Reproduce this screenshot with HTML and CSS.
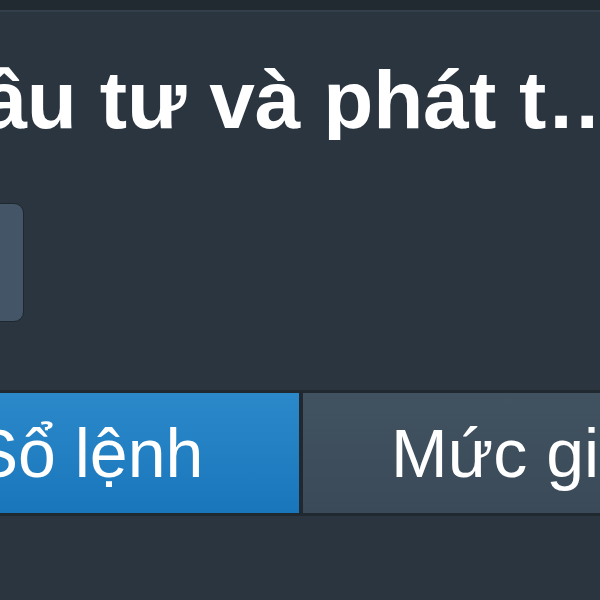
FILE: index.html
```html
<!DOCTYPE html>
<html>
<head>
    <title>Chi tiết mã</title>
    <link rel="stylesheet" href="styles.css">
</head>
<body>
    <div class="topbar"></div>

    <div class="header">
        <h1 class="title">Đầu tư và phát triển</h1>
        <div class="search-box"></div>
    </div>

    <div class="tabs">
        <div class="tab active">Sổ lệnh</div>
        <div class="tab">Mức giá</div>
    </div>
</body>
</html>
```

FILE: styles.css
```css
body {
    font-family: 'Liberation Sans', Arial, sans-serif;
    margin: 0;
    background-color: #2a3540;
    overflow: hidden;
    width: 600px;
    height: 600px;
}

.topbar {
    height: 10px;
    background-color: #212931;
    border-bottom: 2px solid #33404c;
}

.header {
    display: flex;
    flex-direction: column;
}

.title {
    margin: 48px 0 0 -78px;
    width: 733px;
    font-size: 82px;
    line-height: 80px;
    font-weight: bold;
    color: #fff;
    white-space: nowrap;
    overflow: hidden;
    text-overflow: ellipsis;
}

.search-box {
    margin: 63px 0 0 -76px;
    width: 98px;
    height: 117px;
    background-color: #435566;
    border: 1px solid #1f272f;
    border-radius: 10px;
}

.tabs {
    display: flex;
    gap: 4px;
    margin: 68px 0 0 -123px;
    padding: 3px 0;
    background-color: #202830;
}

.tab {
    flex: 0 0 422px;
    height: 120px;
    display: flex;
    align-items: center;
    justify-content: center;
    font-size: 68px;
    color: #fff;
    white-space: nowrap;
    background: linear-gradient(#415261, #3a4a58);
}

.tab.active {
    background: linear-gradient(#2b89ca, #1a76bb);
}
```
